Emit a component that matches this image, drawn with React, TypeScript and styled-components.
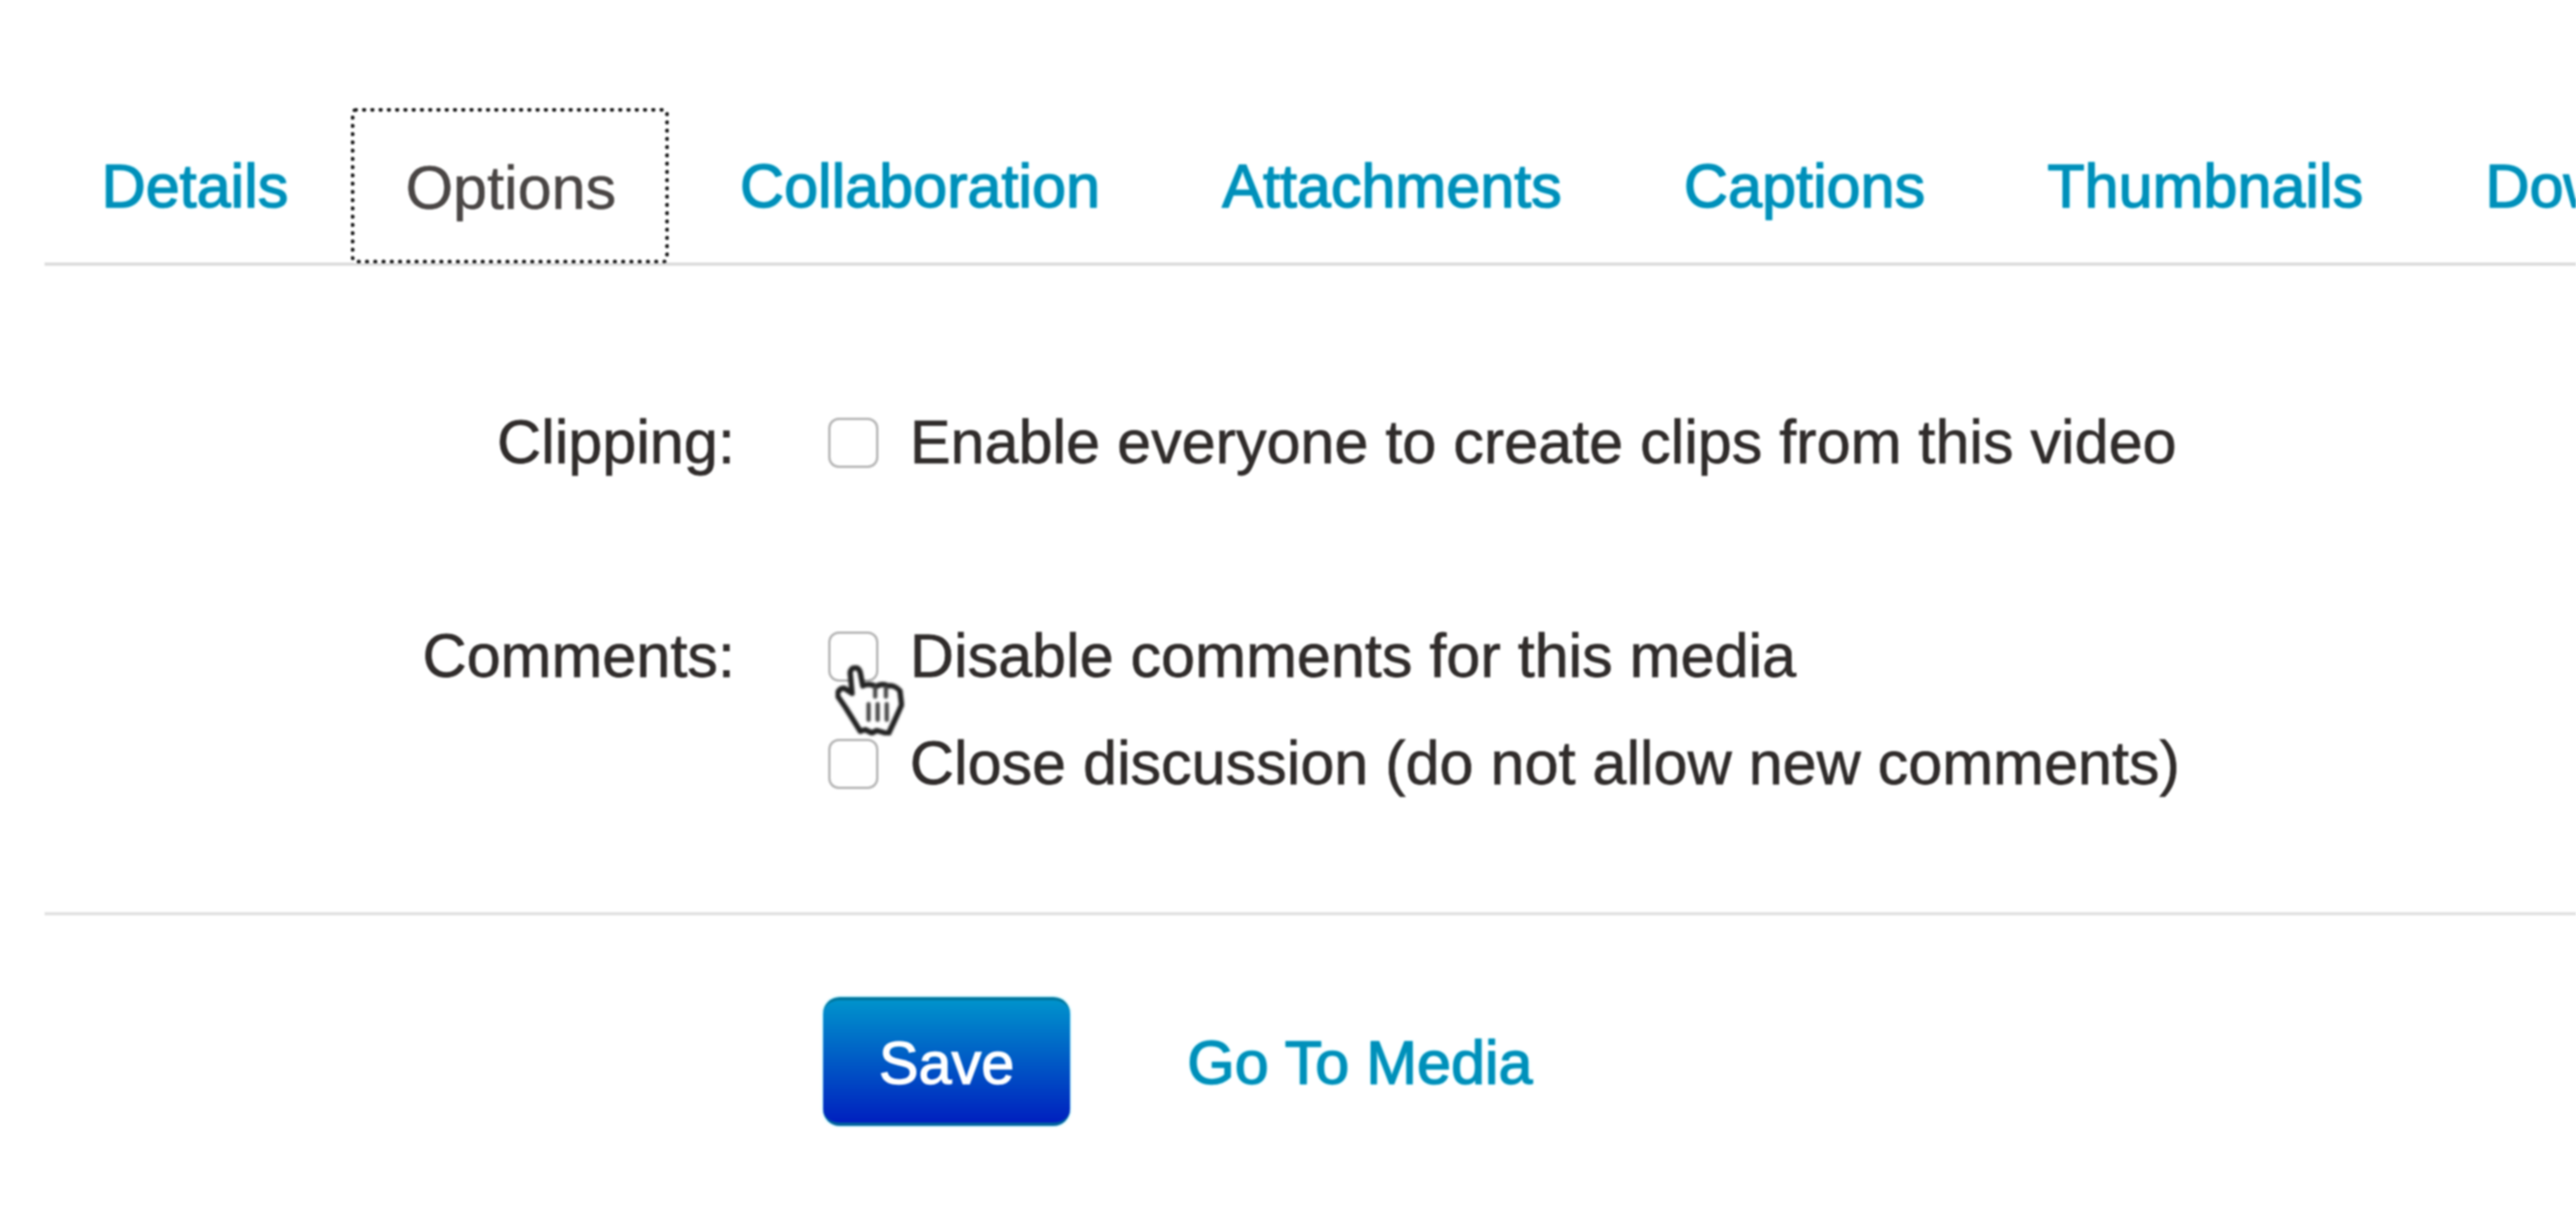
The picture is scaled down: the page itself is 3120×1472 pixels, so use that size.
import { FC } from 'react';
import styled, { createGlobalStyle } from 'styled-components';

const TABS = ['Details', 'Options', 'Collaboration', 'Attachments', 'Captions', 'Thumbnails', 'Downloads'];
const ACTIVE_TAB = 'Options';

const GlobalStyle = createGlobalStyle`
	html, body {
		margin: 0;
		width: 3120px;
		height: 1472px;
		overflow: hidden;
		background: #fff;
		font-family: 'Liberation Sans', Arial, sans-serif;
	}
`;

const HandCursor: FC = () => (
	<Hand viewBox="0 0 83 85" fill="none" aria-hidden="true">
		<path
			d="M24 3C19 3 17 7 18 12L20 34L11 28C6 27 1 32 3 38L12 51L30 80L36 78L44 82L50 79L64 83L72 66L80 48L78 31C74 26 68 24 63 25C59 22 53 23 49 26C45 23 38 22 33 25L30 9C29 5 27 3 24 3Z"
			fill="#fff"
			stroke="#222"
			strokeWidth="6.5"
			strokeLinejoin="round"
		/>
		<path d="M40 47V66M51 47V66M62 47V66M48 27V38M61 27V38" stroke="#444" strokeWidth="5" strokeLinecap="round" />
	</Hand>
);

export default function App() {
	return (
		<Page>
			<GlobalStyle />
			<TabBar>
				{TABS.map((tab) => (
					<Tab key={tab} $active={tab === ACTIVE_TAB}>
						{tab}
					</Tab>
				))}
			</TabBar>
			<Form>
				<FieldRow>
					<Label>Clipping:</Label>
					<Options>
						<Option>
							<Checkbox />
							Enable everyone to create clips from this video
						</Option>
					</Options>
				</FieldRow>
				<CommentsRow>
					<Label>Comments:</Label>
					<Options>
						<Option>
							<CheckboxWrap>
								<Checkbox />
								<HandCursor />
							</CheckboxWrap>
							Disable comments for this media
						</Option>
						<Option>
							<Checkbox />
							Close discussion (do not allow new comments)
						</Option>
					</Options>
				</CommentsRow>
			</Form>
			<Actions>
				<SaveButton type="button">Save</SaveButton>
				<MediaLink>Go To Media</MediaLink>
			</Actions>
		</Page>
	);
}

const Page = styled.div`
	box-sizing: border-box;
	width: 3120px;
	height: 1472px;
	padding: 131px 0 0 54px;
	overflow: hidden;
	background: #fff;
	filter: blur(0.8px);
`;

const TabBar = styled.div`
	display: flex;
	gap: 28px;
	height: 187px;
	padding-left: 9px;
	border-bottom: 4px solid #dcdcdc;
	white-space: nowrap;
`;

const Tab = styled.div<{ $active: boolean }>`
	box-sizing: border-box;
	height: 188px;
	margin: ${({ $active }) => ($active ? '0 -2px 0 -12px' : '0')};
	padding: ${({ $active }) => ($active ? '0 59px 0 61px' : '0 60px')};
	font-size: 74px;
	line-height: ${({ $active }) => ($active ? 184 : 190)}px;
	color: ${({ $active }) => ($active ? '#4a4645' : '#0090ba')};
	border: ${({ $active }) => ($active ? '5px dotted #1c1c1c' : 'none')};
	border-radius: 6px;
	background: ${({ $active }) => ($active ? '#fff' : 'transparent')};
	-webkit-text-stroke: ${({ $active }) => ($active ? '0.6px #4a4645' : '1.5px #0090ba')};
	text-shadow: ${({ $active }) => ($active ? 'none' : '0 0 3px rgba(0, 220, 255, 0.7)')};
`;

const Form = styled.div`
	display: flex;
	flex-direction: column;
	padding-top: 176px;
	height: 787px;
	box-sizing: border-box;
	border-bottom: 4px solid #e2e2e2;
`;

const FieldRow = styled.div`
	display: grid;
	grid-template-columns: 836px 1fr;
	column-gap: 113px;
	font-size: 74px;
	line-height: 76px;
	color: #302c2b;
	-webkit-text-stroke: 0.8px #302c2b;
`;

const CommentsRow = styled(FieldRow)`
	margin-top: 183px;
`;

const Label = styled.div`
	text-align: right;
`;

const Options = styled.div`
	display: flex;
	flex-direction: column;
	gap: 54px;
`;

const Option = styled.div`
	display: flex;
	align-items: center;
	gap: 38px;
	white-space: nowrap;
`;

const Checkbox = styled.span`
	box-sizing: border-box;
	display: block;
	flex: none;
	width: 61px;
	height: 61px;
	border: 3px solid #b8b8b8;
	border-radius: 13px;
	background: #fff;
`;

const CheckboxWrap = styled.span`
	position: relative;
	display: block;
	flex: none;
`;

const Hand = styled.svg`
	position: absolute;
	left: 9px;
	top: 41px;
	width: 83px;
	height: 85px;
	filter: blur(0.8px);
`;

const Actions = styled.div`
	display: flex;
	align-items: center;
	gap: 142px;
	padding: 99px 0 0 943px;
`;

const SaveButton = styled.button`
	width: 299px;
	height: 156px;
	padding: 4px 0 0;
	border: none;
	border-top: 4px solid #00779f;
	border-bottom: 4px solid #00609f;
	border-radius: 20px;
	background: linear-gradient(#0093cc, #0020bf);
	box-shadow: 0 0 3px rgba(0, 210, 255, 0.7);
	color: #fff;
	font-family: inherit;
	font-size: 72px;
	-webkit-text-stroke: 1.5px #fff;
`;

const MediaLink = styled.span`
	padding-top: 2px;
	font-size: 74px;
	color: #0090ba;
	-webkit-text-stroke: 1.5px #0090ba;
	text-shadow: 0 0 3px rgba(0, 220, 255, 0.7);
`;
